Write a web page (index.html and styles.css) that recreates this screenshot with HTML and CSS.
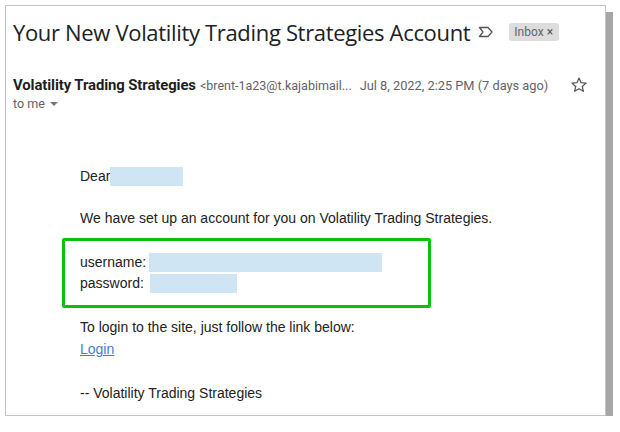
FILE: index.html
```html
<!DOCTYPE html>
<html>
<head>
<meta charset="utf-8">
<link rel="stylesheet" href="styles.css">
</head>
<body>
<div class="panel">
  <div class="subject-row">
    <h1 class="subject">Your New Volatility Trading Strategies Account</h1>
    <svg class="imp" width="16" height="12" viewBox="0 0 16 12"><path d="M1.5 1.5 H10 L14 6 L10 10.5 H1.5 L5 6 Z" fill="none" stroke="#555" stroke-width="1.3" stroke-linejoin="round"/></svg>
    <span class="label">Inbox <span class="x">×</span></span>
  </div>
  <div class="sender-row">
    <span class="sender">Volatility Trading Strategies</span>
    <span class="addr">&lt;brent-1a23@t.kajabimail...</span>
    <span class="date">Jul 8, 2022, 2:25 PM (7 days ago)</span>
    <svg class="star" width="18" height="18" viewBox="0 0 24 24"><path d="M12 2.8l2.75 6.1 6.65.6-5.050 4.4 1.5 6.5L12 16.95 6.15 20.4l1.5-6.5L2.6 9.5l6.65-.6z" fill="none" stroke="#555" stroke-width="1.7" stroke-linejoin="round"/></svg>
  </div>
  <div class="tome">to me <span class="caret"></span></div>
  <div class="body">
    <p class="dear">Dear<span class="redact r-name"></span></p>
    <p class="intro">We have set up an account for you on Volatility Trading Strategies.</p>
    <div class="creds">
      <div class="cred"><span>username:</span><span class="redact r-user"></span></div>
      <div class="cred"><span>password:</span><span class="redact r-pass"></span></div>
    </div>
    <p class="follow">To login to the site, just follow the link below:</p>
    <a class="login" href="#">Login</a>
    <p class="sign">-- Volatility Trading Strategies</p>
  </div>
</div>
</body>
</html>
```

FILE: styles.css
```css
html, body { margin: 0; padding: 0; background: #fff; }
body { padding: 5px 0 0 5px; }
.panel {
  width: 599px;
  height: 409px;
  border: 1px solid #c4c4c4;
  box-shadow: 7px 7px 0 #a6a6a6;
  background: #fff;
  box-sizing: content-box;
}
.subject-row {
  display: flex;
  align-items: center;
  padding: 12px 0 0 7px;
  height: 28px;
}
.subject {
  margin: 0;
  font-family: "Open Sans", Roboto, sans-serif;
  font-weight: 400;
  font-size: 22px;
  letter-spacing: -0.33px;
  color: #202124;
  line-height: 28px;
}
.imp { margin-left: 8px; }
.label {
  margin-left: 15px;
  background: #dddddd;
  border-radius: 3px;
  font-family: Roboto, sans-serif;
  font-size: 12px;
  color: #666;
  padding: 1px 6px 1px 5px;
  line-height: 16px;
}
.label .x { font-size: 12px; color: #555; }
.sender-row {
  display: flex;
  align-items: center;
  margin-top: 29px;
  padding-left: 7px;
  height: 20px;
  font-family: Roboto, sans-serif;
}
.sender { font-weight: 700; font-size: 14.9px; color: #1f1f1f; letter-spacing: -0.1px; }
.addr { font-size: 12.5px; color: #5f6368; margin-left: 4px; }
.date { font-size: 12.8px; color: #5f6368; margin-left: 8px; }
.star { margin-left: 22px; }
.tome {
  padding-left: 7px;
  font-family: Roboto, sans-serif;
  font-size: 12.5px;
  color: #5f6368;
  line-height: 16px;
  margin-top: 1px;
  display: flex;
  align-items: center;
}
.caret {
  display: inline-block;
  margin-left: 5px;
  width: 0; height: 0;
  border-left: 4px solid transparent;
  border-right: 4px solid transparent;
  border-top: 4px solid #777;
}
.body {
  padding-left: 74px;
  font-family: "Liberation Sans", Arial, sans-serif;
  font-size: 14px;
  color: #222;
  line-height: 21px;
}
.body p { margin: 0; }
.dear { margin-top: 54px !important; display: flex; align-items: center; }
.redact { display: inline-block; background: #cfe5f4; height: 19px; }
.r-name { width: 73px; }
.intro { margin-top: 21px !important; }
.creds {
  margin: 9px 0 0 -18px;
  width: 369px;
  border: 3px solid #0ac20a;
  border-radius: 2px;
  padding: 11px 0 3px 15px;
  box-sizing: border-box;
  height: 70px;
}
.cred { display: flex; align-items: center; height: 21px; line-height: 21px; }
.r-user { width: 233px; margin-left: 3px; }
.r-pass { width: 87px; margin-left: 6px; }
.follow { margin-top: 9px !important; }
.login { color: #3b82d6; text-decoration: underline; display: inline-block; margin-top: 1px; }
.sign { margin-top: 23px !important; }
```
